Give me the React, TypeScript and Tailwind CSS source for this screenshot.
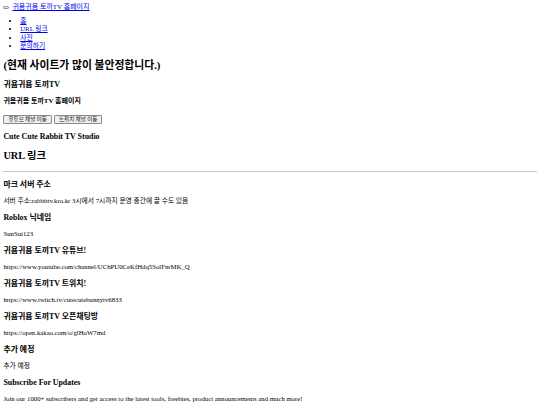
import React from "react";

const NAV = ["홈", "URL 링크", "사진", "문의하기"];

const LINKS = [
  { title: "마크 서버 주소", body: "서버 주소:rabbittv.kro.kr 3시에서 7시까지 운영 중간에 끌 수도 있음" },
  { title: "Roblox 닉네임", body: "SunSui123" },
  { title: "귀욤귀욤 토끼TV 유튜브!", body: "https://www.youtube.com/channel/UChPU0CeKfHdq5SolFnrMK_Q" },
  { title: "귀욤귀욤 토끼TV 트위치!", body: "https://www.twitch.tv/cutecutebunnytv6833" },
  { title: "귀욤귀욤 토끼TV 오픈채팅방", body: "https://open.kakao.com/o/glHoW7md" },
  { title: "추가 예정", body: "추가 예정" },
  {
    title: "Subscribe For Updates",
    body: "Join our 1000+ subscribers and get access to the latest tools, freebies, product announcements and much more!",
  },
];

export default function App() {
  return (
    <div className="min-h-[405px] bg-white">
      <div className="m-[3.375px] mt-0 pt-[3.375px] text-[6.75px] text-black font-['Liberation_Serif','Noto_Sans_CJK_KR',serif]">
        {/* header */}
        <div className="flex items-center gap-[3px] leading-[8px] h-[8px]">
          <button className="w-[6px] h-[3px] bg-[#e4e4e4] border-[0.5px] border-[#9a9a9a] rounded-[1px]" />
          <a href="#" className="text-[#0000ee] underline text-[7px]">
            귀욤귀욤 토끼TV 홈페이지
          </a>
        </div>
        <ul className="list-disc mt-[5.5px] pl-[16.875px]">
          {NAV.map((item) => (
            <li key={item} className="leading-[8.4px]">
              <a href="#" className="text-[#0000ee] underline">
                {item}
              </a>
            </li>
          ))}
        </ul>

        <h1 className="my-[8.5px] text-[10.8px] font-bold leading-[12px]">(현재 사이트가 많이 불안정합니다.)</h1>
        <h3 className="my-[8.5px] text-[7.9px] font-bold leading-[9px]">귀욤귀욤 토끼TV</h3>
        <h4 className="my-[8.25px] text-[7px] font-bold leading-[8.5px]">귀욤귀욤 토끼TV 홈페이지</h4>

        <div className="mt-[9.25px] flex items-center gap-[2px] h-[9px]">
          <button className="h-[9px] px-[4px] text-[5.6px] leading-[7px] bg-[#efefef] border-[0.5px] border-[#8a8a8a] rounded-[1px] font-['Noto_Sans_CJK_KR',sans-serif] text-[#222]">
            유튜브 채널 이동
          </button>
          <button className="h-[9px] px-[4px] text-[5.6px] leading-[7px] bg-[#efefef] border-[0.5px] border-[#8a8a8a] rounded-[1px] font-['Noto_Sans_CJK_KR',sans-serif] text-[#222]">
            트위치 채널 이동
          </button>
        </div>

        <h3 className="my-[8px] text-[7.9px] font-bold leading-[9px]">Cute Cute Rabbit TV Studio</h3>
        <h2 className="mt-[9.5px] mb-[8.5px] text-[10.3px] font-bold leading-[12px]">URL 링크</h2>
        <hr className="border-0 border-t border-[#c8c8c8]" />

        {LINKS.map((link) => (
          <section key={link.title}>
            <h3 className="my-[8px] text-[7.9px] font-bold leading-[9px]">{link.title}</h3>
            <p className="my-[8px] leading-[8px]">{link.body}</p>
          </section>
        ))}
      </div>
    </div>
  );
}
